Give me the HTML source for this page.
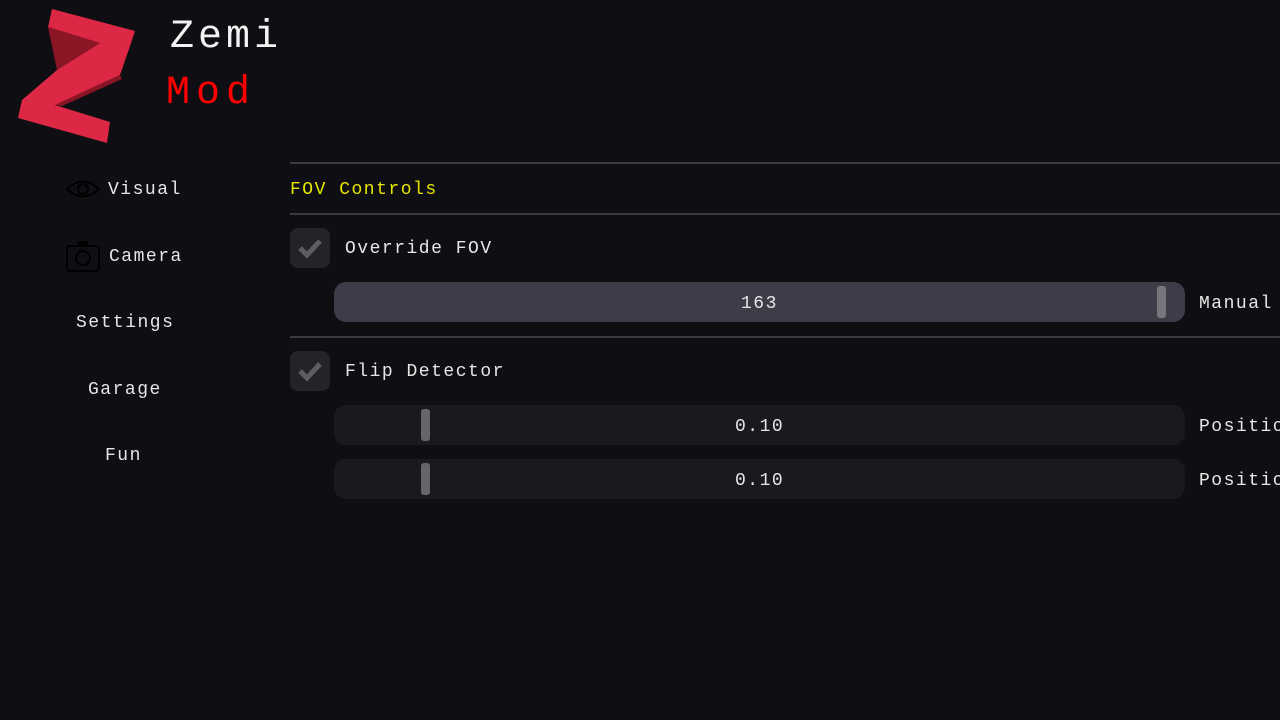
<!DOCTYPE html>
<html><head><style>
body{margin:0;width:1280px;height:720px;background:#0f0e13;overflow:hidden;position:relative;font-family:"Liberation Mono",monospace;color:#e6e6e6;}
.t{position:absolute;font-size:18px;letter-spacing:1.5px;line-height:20px;white-space:nowrap;}
.hr{position:absolute;left:290px;right:0;height:2px;background:#3a3940;}
.cb{position:absolute;width:40px;height:40px;border-radius:8px;background:#24232a;}
.sl{position:absolute;left:334px;width:851px;height:40px;border-radius:12px;}
.grab{position:absolute;width:9px;height:32px;top:4px;border-radius:3px;background:#66656c;}
</style></head><body>
<svg style="position:absolute;left:0;top:0" width="150" height="150" viewBox="0 0 150 150">
<polygon points="48,27 100,43 57,70" fill="#8a1525"/>
<polygon points="52,9 135,31 128,52 120,75 55,105 110,122 107,143 18,118 22,100 57,70 100,43 48,27" fill="#dc2745"/>
<polygon points="120,75 55,105 62,106 122,79" fill="#8a1525"/>
</svg>
<div class="t" style="left:170px;top:16px;font-size:40px;line-height:44px;letter-spacing:4px;color:#f2f2f2">Zemi</div>
<div class="t" style="left:166px;top:72px;font-size:40px;line-height:44px;letter-spacing:6px;color:#ff0000">Mod</div>
<svg style="position:absolute;left:66px;top:178px" width="34" height="22" viewBox="0 0 34 22"><path d="M1 11 Q17 -4 33 11 Q17 26 1 11Z" fill="none" stroke="#000" stroke-width="2"/><circle cx="17" cy="11" r="5" fill="none" stroke="#000" stroke-width="2"/></svg>
<div class="t" style="left:108px;top:180px">Visual</div>
<svg style="position:absolute;left:66px;top:240px" width="34" height="32" viewBox="0 0 34 32"><rect x="1" y="6" width="32" height="25" rx="3" fill="none" stroke="#000" stroke-width="2"/><rect x="12" y="1" width="10" height="5" fill="#000"/><circle cx="17" cy="18" r="7" fill="none" stroke="#000" stroke-width="2"/></svg>
<div class="t" style="left:109px;top:247px">Camera</div>
<div class="t" style="left:76px;top:313px">Settings</div>
<div class="t" style="left:88px;top:380px">Garage</div>
<div class="t" style="left:105px;top:446px">Fun</div>
<div class="hr" style="top:162px"></div>
<div class="t" style="left:290px;top:180px;color:#e6e600">FOV Controls</div>
<div class="hr" style="top:213px"></div>
<div class="cb" style="left:290px;top:228px"></div>
<svg style="position:absolute;left:290px;top:228px" width="40" height="40"><path d="M10 20 L17 27 L30 13" fill="none" stroke="#5e5d63" stroke-width="5"/></svg>
<div class="t" style="left:345px;top:239px">Override FOV</div>
<div class="sl" style="top:282px;background:#3d3c48"><div class="grab" style="left:823px;background:#77767d"></div></div>
<div class="t" style="left:741px;top:294px">163</div>
<div class="t" style="left:1199px;top:294px">Manual</div>
<div class="hr" style="top:336px"></div>
<div class="cb" style="left:290px;top:351px"></div>
<svg style="position:absolute;left:290px;top:351px" width="40" height="40"><path d="M10 20 L17 27 L30 13" fill="none" stroke="#5e5d63" stroke-width="5"/></svg>
<div class="t" style="left:345px;top:362px">Flip Detector</div>
<div class="sl" style="top:405px;background:#1a1920"><div class="grab" style="left:87px"></div></div>
<div class="t" style="left:735px;top:417px">0.10</div>
<div class="t" style="left:1199px;top:417px">Position</div>
<div class="sl" style="top:459px;background:#1a1920"><div class="grab" style="left:87px"></div></div>
<div class="t" style="left:735px;top:471px">0.10</div>
<div class="t" style="left:1199px;top:471px">Position</div>
</body></html>
